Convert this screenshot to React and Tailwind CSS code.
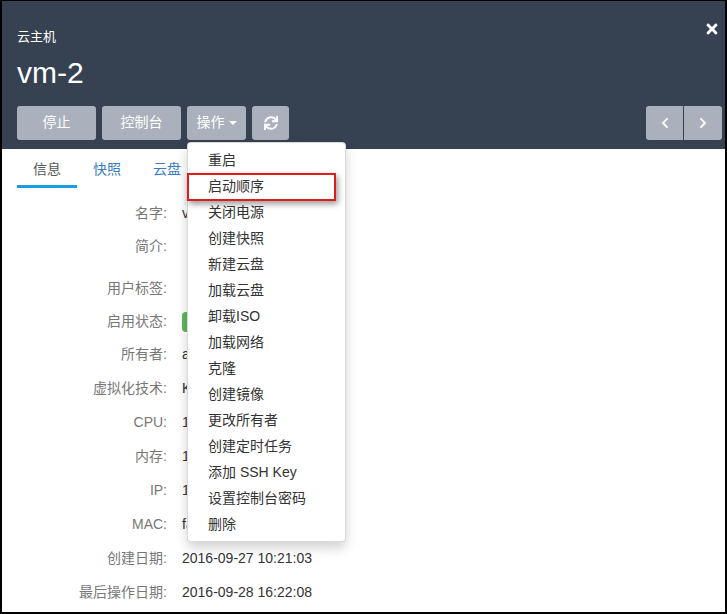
import React from "react";
import { FaTimes, FaChevronLeft, FaChevronRight, FaSync } from "react-icons/fa";

const font = { fontFamily: '"Liberation Sans", Arial, "Noto Sans CJK SC", sans-serif' };

const menuItems = [
  "重启", "启动顺序", "关闭电源", "创建快照", "新建云盘", "加载云盘", "卸载ISO", "加载网络",
  "克隆", "创建镜像", "更改所有者", "创建定时任务", "添加 SSH Key", "设置控制台密码", "删除",
];

const rows = [
  ["名字:", "vm-2", "h-[33px]"],
  ["简介:", "", "h-[33px] mb-[9px]"],
  ["用户标签:", "", "h-[33px]"],
  ["启用状态:", "badge", "h-[33px]"],
  ["所有者:", "admin", "h-[33px]"],
  ["虚拟化技术:", "KVM", "h-[34px]"],
  ["CPU:", "1", "h-[34px]"],
  ["内存:", "1 GB", "h-[34px]"],
  ["IP:", "10.0.0.12", "h-[34px]"],
  ["MAC:", "fa:16:3e:5b:2c:81", "h-[34px]"],
  ["创建日期:", "2016-09-27 10:21:03", "h-[34px]"],
  ["最后操作日期:", "2016-09-28 16:22:08", "h-[34px]"],
];

export default function App() {
  return (
    <div style={font} className="w-[727px] h-[614px] bg-white border-t border-l-2 border-r-2 border-b-2 border-black overflow-hidden flex flex-col">
      <div className="relative bg-[#364152] pt-[27px] pl-[15px] pr-[3px] pb-[9px]">
        <div className="text-[13px] leading-[18px] text-white">云主机</div>
        <div className="mt-[9px] text-[30px] leading-[36px] text-white">vm-2</div>
        <div className="mt-[14px] flex items-center justify-between">
          <div className="flex gap-[6px]">
            <button className="w-[79px] h-[34px] rounded-[3px] bg-[#aab1bc] text-white text-[14px]">停止</button>
            <button className="w-[79px] h-[34px] rounded-[3px] bg-[#aab1bc] text-white text-[14px]">控制台</button>
            <div className="relative">
              <button className="w-[59px] h-[34px] rounded-[3px] bg-[#aab1bc] text-white text-[14px] flex items-center justify-center gap-[4px]">
                操作
                <span className="w-0 h-0 border-l-[4px] border-r-[4px] border-t-[4px] border-l-transparent border-r-transparent border-t-white"></span>
              </button>
              <div className="absolute left-0 top-[36px] z-10 w-[159px] bg-white border border-[rgba(0,0,0,0.15)] rounded-[4px] shadow-[0_6px_12px_rgba(0,0,0,0.175)] py-[4px]">
                {menuItems.map((m) => (
                  <div key={m} className="h-[26px] leading-[26px] pl-[20px] text-[14px] text-[#333] whitespace-nowrap">{m}</div>
                ))}
                <div className="absolute left-[-1px] top-[30px] w-[149px] h-[28px] border-2 border-[#e01b1b] shadow-[2px_3px_6px_rgba(0,0,0,0.4)]"></div>
              </div>
            </div>
            <button className="w-[37px] h-[34px] rounded-[3px] bg-[#aab1bc] text-white flex items-center justify-center">
              <FaSync className="w-[14px] h-[14px]" />
            </button>
          </div>
          <div className="flex rounded-[3px] overflow-hidden mt-[1px]">
            <button className="w-[38px] h-[34px] bg-[#aab1bc] text-white flex items-center justify-center border-r border-[#364152]">
              <FaChevronLeft className="w-[12px] h-[12px]" />
            </button>
            <button className="w-[38px] h-[34px] bg-[#aab1bc] text-white flex items-center justify-center">
              <FaChevronRight className="w-[12px] h-[12px]" />
            </button>
          </div>
        </div>
        <FaTimes className="absolute right-[5px] top-[20px] w-[16px] h-[16px] text-white" />
      </div>

      <div className="pl-[15px] mt-[10px] flex text-[14px]">
        <div className="px-[16px] leading-[20px] pb-[6px] border-b-[3px] border-[#1c9be6] text-[#555]">信息</div>
        <div className="px-[16px] leading-[20px] pb-[6px] border-b-[3px] border-transparent text-[#3a7bbf]">快照</div>
        <div className="px-[16px] leading-[20px] pb-[6px] border-b-[3px] border-transparent text-[#3a7bbf]">云盘</div>
        <div className="px-[16px] leading-[20px] pb-[6px] border-b-[3px] border-transparent text-[#3a7bbf]">网络接口</div>
        <div className="px-[16px] leading-[20px] pb-[6px] border-b-[3px] border-transparent text-[#3a7bbf]">监控</div>
      </div>

      <div className="mt-[9px] pl-[15px] text-[14px]">
        {rows.map(([label, value, h]) => (
          <div key={label} className={`flex items-center ${h}`}>
            <div className="w-[150px] text-right text-[#777]">{label}</div>
            <div className="ml-[15px] text-[#333]">
              {value === "badge" ? (
                <span className="inline-block px-[8px] h-[20px] leading-[20px] rounded-[4px] bg-[#5cb85c] text-white text-[12px]">运行中</span>
              ) : (
                value
              )}
            </div>
          </div>
        ))}
      </div>
    </div>
  );
}
